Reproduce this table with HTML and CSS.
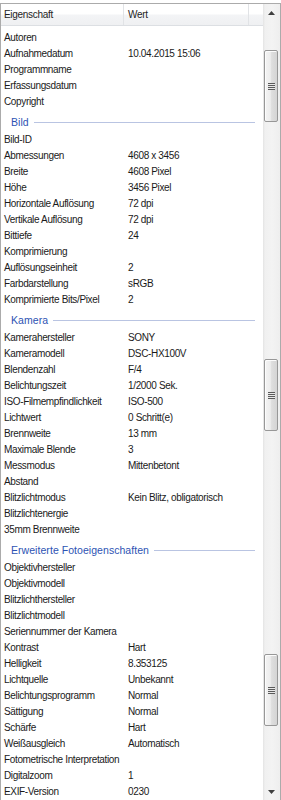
FILE: index.html
```html
<!DOCTYPE html>
<html lang="de">
<head>
<meta charset="utf-8">
<title>Details</title>
<link rel="stylesheet" href="styles.css">
</head>
<body>
<div class="window">
  <div class="pane">
    <div class="colheader">
      <div class="hcell hname">Eigenschaft</div>
      <div class="hcell hvalue">Wert</div>
      <div class="hcell hfill"></div>
    </div>
    <div class="list">
      <div class="list-inner">
        <div class="group"><span>Ursprung</span></div>
        <div class="row"><span class="k">Autoren</span><span class="v"></span></div>
        <div class="row"><span class="k">Aufnahmedatum</span><span class="v">10.04.2015 15:06</span></div>
        <div class="row"><span class="k">Programmname</span><span class="v"></span></div>
        <div class="row"><span class="k">Erfassungsdatum</span><span class="v"></span></div>
        <div class="row"><span class="k">Copyright</span><span class="v"></span></div>
        <div class="group"><span>Bild</span></div>
        <div class="row"><span class="k">Bild-ID</span><span class="v"></span></div>
        <div class="row"><span class="k">Abmessungen</span><span class="v">4608 x 3456</span></div>
        <div class="row"><span class="k">Breite</span><span class="v">4608 Pixel</span></div>
        <div class="row"><span class="k">Höhe</span><span class="v">3456 Pixel</span></div>
        <div class="row"><span class="k">Horizontale Auflösung</span><span class="v">72 dpi</span></div>
        <div class="row"><span class="k">Vertikale Auflösung</span><span class="v">72 dpi</span></div>
        <div class="row"><span class="k">Bittiefe</span><span class="v">24</span></div>
        <div class="row"><span class="k">Komprimierung</span><span class="v"></span></div>
        <div class="row"><span class="k">Auflösungseinheit</span><span class="v">2</span></div>
        <div class="row"><span class="k">Farbdarstellung</span><span class="v">sRGB</span></div>
        <div class="row"><span class="k">Komprimierte Bits/Pixel</span><span class="v">2</span></div>
        <div class="group"><span>Kamera</span></div>
        <div class="row"><span class="k">Kamerahersteller</span><span class="v">SONY</span></div>
        <div class="row"><span class="k">Kameramodell</span><span class="v">DSC-HX100V</span></div>
        <div class="row"><span class="k">Blendenzahl</span><span class="v">F/4</span></div>
        <div class="row"><span class="k">Belichtungszeit</span><span class="v">1/2000 Sek.</span></div>
        <div class="row"><span class="k">ISO-Filmempfindlichkeit</span><span class="v">ISO-500</span></div>
        <div class="row"><span class="k">Lichtwert</span><span class="v">0 Schritt(e)</span></div>
        <div class="row"><span class="k">Brennweite</span><span class="v">13 mm</span></div>
        <div class="row"><span class="k">Maximale Blende</span><span class="v">3</span></div>
        <div class="row"><span class="k">Messmodus</span><span class="v">Mittenbetont</span></div>
        <div class="row"><span class="k">Abstand</span><span class="v"></span></div>
        <div class="row"><span class="k">Blitzlichtmodus</span><span class="v">Kein Blitz, obligatorisch</span></div>
        <div class="row"><span class="k">Blitzlichtenergie</span><span class="v"></span></div>
        <div class="row"><span class="k">35mm Brennweite</span><span class="v"></span></div>
        <div class="group"><span>Erweiterte Fotoeigenschaften</span></div>
        <div class="row"><span class="k">Objektivhersteller</span><span class="v"></span></div>
        <div class="row"><span class="k">Objektivmodell</span><span class="v"></span></div>
        <div class="row"><span class="k">Blitzlichthersteller</span><span class="v"></span></div>
        <div class="row"><span class="k">Blitzlichtmodell</span><span class="v"></span></div>
        <div class="row"><span class="k">Seriennummer der Kamera</span><span class="v"></span></div>
        <div class="row"><span class="k">Kontrast</span><span class="v">Hart</span></div>
        <div class="row"><span class="k">Helligkeit</span><span class="v">8.353125</span></div>
        <div class="row"><span class="k">Lichtquelle</span><span class="v">Unbekannt</span></div>
        <div class="row"><span class="k">Belichtungsprogramm</span><span class="v">Normal</span></div>
        <div class="row"><span class="k">Sättigung</span><span class="v">Normal</span></div>
        <div class="row"><span class="k">Schärfe</span><span class="v">Hart</span></div>
        <div class="row"><span class="k">Weißausgleich</span><span class="v">Automatisch</span></div>
        <div class="row"><span class="k">Fotometrische Interpretation</span><span class="v"></span></div>
        <div class="row"><span class="k">Digitalzoom</span><span class="v">1</span></div>
        <div class="row"><span class="k">EXIF-Version</span><span class="v">0230</span></div>
      </div>
    </div>
  </div>
  <div class="scrollbar">
    <div class="sbtn">
      <svg width="7" height="4" viewBox="0 0 7 4"><polygon points="3.5,0 7,4 0,4" fill="#3f3f3f"/></svg>
    </div>
    <div class="thumb t1"><span class="grip"></span></div>
    <div class="thumb t2"><span class="grip"></span></div>
    <div class="thumb t3"><span class="grip"></span></div>
    <div class="sbtn sbtn-down">
      <svg width="7" height="4" viewBox="0 0 7 4"><polygon points="0,0 7,0 3.5,4" fill="#3f3f3f"/></svg>
    </div>
  </div>
</div>
</body>
</html>
```
FILE: styles.css
```css
html, body {
  margin: 0;
  padding: 0;
  background: #ffffff;
}
body {
  width: 281px;
  height: 800px;
  overflow: hidden;
  font-family: "Liberation Sans", Arial, sans-serif;
  font-size: 10px;
  color: #1a1a1a;
}
.window {
  margin-top: 3px;
  height: 797px;
  box-sizing: border-box;
  border-top: 1px solid #ababab;
  border-left: 1px solid #ababab;
  border-right: 1px solid #ababab;
  display: grid;
  grid-template-columns: 262px 17px;
  background: #ffffff;
}
.pane {
  display: flex;
  flex-direction: column;
  min-width: 0;
  height: 796px;
}
.colheader {
  display: flex;
  height: 21px;
  border-bottom: 1px solid #dcdfe3;
  background: linear-gradient(#ffffff 0%, #ffffff 45%, #f3f4f6 55%, #eff0f2 100%);
  flex: none;
}
.hcell {
  box-sizing: border-box;
  height: 21px;
  line-height: 21px;
  border-right: 1px solid #e1e3e6;
  letter-spacing: -0.3px;
  color: #1e1e1e;
}
.hname {
  width: 123px;
  padding-left: 3px;
}
.hvalue {
  width: 125px;
  padding-left: 4px;
}
.hfill {
  flex: 1;
  border-right: none;
}
.list {
  flex: 1;
  overflow: hidden;
}
.list-inner {
  margin-top: -18px;
}
.row {
  display: grid;
  grid-template-columns: 123px 1fr;
  height: 16px;
  line-height: 16px;
  letter-spacing: -0.35px;
  white-space: nowrap;
}
.k {
  padding-left: 3px;
  overflow: hidden;
}
.v {
  padding-left: 4px;
}
.group {
  display: flex;
  align-items: center;
  height: 22px;
  box-sizing: border-box;
  padding: 2px 8px 0 10px;
  color: #2d53b3;
  font-size: 10.5px;
  letter-spacing: 0.05px;
}
.group::after {
  content: "";
  flex: 1;
  height: 1px;
  margin-left: 5px;
  background: #b9c4e2;
}
.scrollbar {
  display: flex;
  flex-direction: column;
  height: 796px;
  background: linear-gradient(90deg, #e3e3e3 0px, #f0f0f0 2px, #f3f3f3 9px, #eeeeee 17px);
}
.sbtn {
  height: 17px;
  flex: none;
  display: flex;
  align-items: center;
  justify-content: center;
  padding-right: 1px;
}
.sbtn-down {
  margin-top: auto;
}
.thumb {
  flex: none;
  box-sizing: border-box;
  width: 14px;
  height: 72px;
  margin-left: 1px;
  border: 1px solid #979797;
  border-radius: 2px;
  background: linear-gradient(90deg, #f4f4f4 0%, #ececec 45%, #dedede 55%, #d4d4d4 100%);
  box-shadow: inset 1px 1px 0 #fcfcfc;
  display: flex;
  align-items: center;
  justify-content: center;
}
.t1 { margin-top: 29px; }
.t2 { margin-top: 237px; }
.t3 { margin-top: 223px; }
.grip {
  width: 7px;
  height: 7px;
  background: repeating-linear-gradient(#5a5a5a 0px, #5a5a5a 1px, #e8e8e8 1px, #e8e8e8 2px);
}
```
